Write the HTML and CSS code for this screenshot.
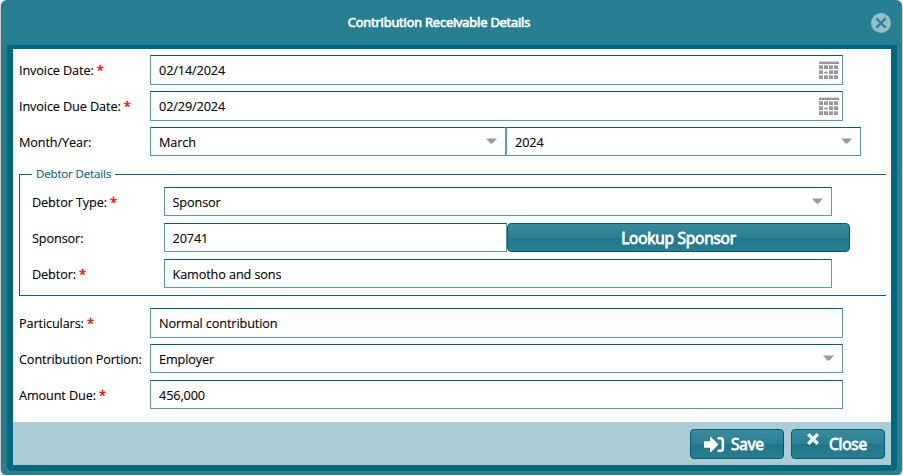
FILE: index.html
```html
<!DOCTYPE html>
<html lang="en">
<head>
<meta charset="utf-8">
<title>Contribution Receivable Details</title>
<link rel="stylesheet" href="styles.css">
</head>
<body>
<svg width="0" height="0" class="defs">
  <symbol id="calendar" viewBox="0 0 20 19">
    <path fill="#999" d="M0 1h20v2H0zM0 5h4v3H0zM5 5h4v3H5zM10 5h4v3h-4zM15 5h4v3h-4zM0 10h4v3H0zM10 10h4v3h-4zM15 10h4v3h-4zM0 15h4v3H0zM5 15h4v3H5zM10 15h4v3h-4zM15 15h4v3h-4zM5 11h1.500v-1h1v1H9v1H7.500v1h-1v-1H5z"/>
    <path fill="#999" opacity=".7" d="M0 4h4v1H0zM5 4h4v1H5zM10 4h4v1h-4zM15 4h4v1h-4zM0 9h4v1H0zM10 9h4v1h-4zM15 9h4v1h-4zM0 14h4v1H0zM5 14h4v1H5zM10 14h4v1h-4zM15 14h4v1h-4z"/>
    <path fill="#999" opacity=".35" d="M0 0h20v1H0z"/>
  </symbol>
  <symbol id="arrow" viewBox="0 0 11 6"><path fill="#999" d="M0 .4h11L6.500 5.500h-2z"/></symbol>
</svg>
<div class="window">
  <header class="title-bar">
    <h1>Contribution Receivable Details</h1>
    <svg class="close-icon" viewBox="0 0 20 20"><circle cx="10" cy="10" r="10" fill="#93bec8"/><path d="M6 6l8 8M14 6l-8 8" stroke="#277f92" stroke-width="2.300" stroke-linecap="round"/></svg>
  </header>
  <main class="frame">
    <form class="form">
      <div class="row"><label>Invoice Date: <b>*</b></label><div class="field tall">02/14/2024<svg class="calendar"><use href="#calendar"/></svg></div></div>
      <div class="row"><label>Invoice Due Date: <b>*</b></label><div class="field tall">02/29/2024<svg class="calendar"><use href="#calendar"/></svg></div></div>
      <div class="row"><label>Month/Year:</label><div class="field month">March<svg class="arrow"><use href="#arrow"/></svg></div><div class="field year">2024<svg class="arrow"><use href="#arrow"/></svg></div></div>
      <fieldset class="group">
        <legend>Debtor Details</legend>
        <div class="row"><label>Debtor Type: <b>*</b></label><div class="field">Sponsor<svg class="arrow"><use href="#arrow"/></svg></div></div>
        <div class="row"><label>Sponsor:</label><div class="field lookup-value">20741</div><button type="button" class="button lookup">Lookup Sponsor</button></div>
        <div class="row"><label>Debtor: <b>*</b></label><div class="field">Kamotho and sons</div></div>
      </fieldset>
      <div class="row"><label>Particulars: <b>*</b></label><div class="field tall">Normal contribution</div></div>
      <div class="row"><label>Contribution Portion:</label><div class="field">Employer<svg class="arrow"><use href="#arrow"/></svg></div></div>
      <div class="row"><label>Amount Due: <b>*</b></label><div class="field number">456,000</div></div>
    </form>
    <footer class="actions">
      <button type="button" class="button action"><svg class="save-icon" viewBox="0 0 21 17"><path fill="#fff" d="M0 5.200h6V1.500Q6 .2 7 1l7.500 7.500L7 16q-1 .8-1-.5v-3.700H0z"/><path fill="none" stroke="#fff" stroke-width="2.600" d="M13.500 2.300h3.200q2.200 0 2.200 2.200v8q0 2.200-2.200 2.200h-3.200"/></svg><span>Save</span></button>
      <button type="button" class="button action"><svg class="cancel-icon" viewBox="0 0 12 12"><path stroke="#fff" stroke-width="3.300" d="M1.200 1.200l9.600 9.600M10.800 1.200l-9.600 9.600"/></svg><span>Close</span></button>
    </footer>
  </main>
</div>
</body>
</html>
```
FILE: styles.css
```css
* { box-sizing: border-box; }
body { margin: 0; background: #fff; font: 12.700px/18px "Open Sans", sans-serif; letter-spacing: -0.120px; color: #000; overflow: hidden; -webkit-text-stroke: 0.100px; }
.defs { display: block; height: 0; }
.window { width: 901px; height: 475px; margin-left: 1px; padding: 0 5px 4px 6px; background: #277f92; border-radius: 6px; box-shadow: 0 1px 3px #777; }
.title-bar { height: 45px; display: flex; align-items: center; padding: 0 6px 0 0; }
h1 { flex: 1; margin: 0 0 1px; text-align: center; font: 400 12.800px/18px "Open Sans", sans-serif; letter-spacing: -0.130px; -webkit-text-stroke: 0.700px; color: #fff; }
.close-icon { width: 20px; height: 20px; margin-top: 1px; }
.frame { width: 890px; height: 426px; border: 6px solid #00677e; border-top-width: 4px; border-radius: 0 0 5px 5px; background: #fff; display: flex; flex-direction: column; }
.form { flex: 1; padding: 6px 5px 0 6px; }
.row { display: flex; height: 36px; align-items: flex-start; }
label { width: 131px; padding-top: 6px; white-space: nowrap; }
label b { color: #f00; font-weight: 400; -webkit-text-stroke: 0.400px; }
.field { width: 693px; height: 29px; padding: 0 8px 0 8px; display: flex; align-items: center; justify-content: space-between; border: 1px solid #5f9ba5; border-top-color: #005c72; }
.tall { height: 30px; }
.calendar { width: 20px; height: 19px; margin-right: -5px; }
.arrow { width: 11px; height: 6px; margin-top: -1px; }
.month { width: 356px; }
.year { width: 355px; }
.group { margin: 2px 0 12px; padding: 4px 0 0 12px; min-width: 0; height: 131px; border: 1px solid #00677e; border-right: 0; }
.group legend { height: 18px; padding: 0 4px; color: #00607a; font-size: 11.500px; letter-spacing: -0.150px; }
.group label { width: 132px; }
.group .field { width: 668px; padding-left: 7.500px; }
.group .lookup-value { width: 343px; }
.button { display: flex; align-items: center; justify-content: center; padding: 0; border: 1px solid #005c72; border-radius: 4px; background: linear-gradient(#398b9c, #288093 50%, #227589 51%, #277f92); color: #fff; font: 400 15.500px/22px "Open Sans", sans-serif; letter-spacing: -0.220px; -webkit-text-stroke: 0.850px; }
.lookup { width: 343px; height: 29px; }
.actions { height: 43px; padding: 7px 6px; display: flex; justify-content: flex-end; gap: 7px; background: #aaccd5; }
.action { width: 94px; height: 30px; justify-content: flex-start; padding-left: 13px; }
.save-icon { width: 21px; height: 17px; margin-right: 6px; }
.cancel-icon { width: 12px; height: 12px; margin: -10px 10px 0 2px; }
```
